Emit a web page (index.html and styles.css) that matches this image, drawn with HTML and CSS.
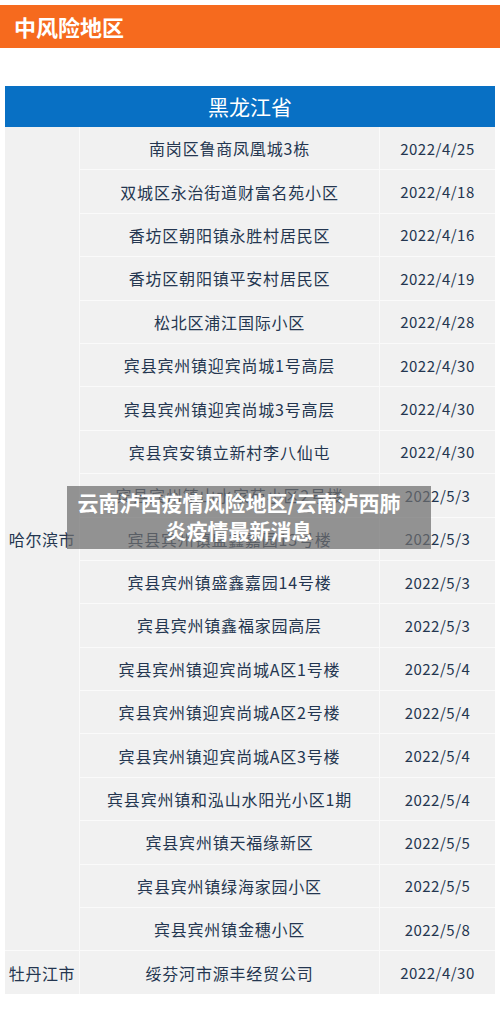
FILE: index.html
```html
<!DOCTYPE html>
<html lang="zh-CN">
<head>
  <meta charset="utf-8">
  <meta name="viewport" content="width=device-width, initial-scale=1">
  <link rel="stylesheet" href="styles.css">
  <title>中风险地区</title>
</head>
<body>
  <!-- Title bar -->
  <div class="title_bar">中风险地区</div>

  <div class="table_wrap">
    <div class="province">黑龙江省</div>
    <table class="risk_table">
      <tr>
        <td class="city" rowspan="19">哈尔滨市</td>
        <td class="place">南岗区鲁商凤凰城3栋</td>
        <td class="date">2022/4/25</td>
      </tr>
      <tr><td class="place">双城区永治街道财富名苑小区</td><td class="date">2022/4/18</td></tr>
      <tr><td class="place">香坊区朝阳镇永胜村居民区</td><td class="date">2022/4/16</td></tr>
      <tr><td class="place">香坊区朝阳镇平安村居民区</td><td class="date">2022/4/19</td></tr>
      <tr><td class="place">松北区浦江国际小区</td><td class="date">2022/4/28</td></tr>
      <tr><td class="place">宾县宾州镇迎宾尚城1号高层</td><td class="date">2022/4/30</td></tr>
      <tr><td class="place">宾县宾州镇迎宾尚城3号高层</td><td class="date">2022/4/30</td></tr>
      <tr><td class="place">宾县宾安镇立新村李八仙屯</td><td class="date">2022/4/30</td></tr>
      <tr><td class="place">宾县宾州镇山水家苑小区2号楼</td><td class="date">2022/5/3</td></tr>
      <tr><td class="place">宾县宾州镇盛鑫嘉园13号楼</td><td class="date">2022/5/3</td></tr>
      <tr><td class="place">宾县宾州镇盛鑫嘉园14号楼</td><td class="date">2022/5/3</td></tr>
      <tr><td class="place">宾县宾州镇鑫福家园高层</td><td class="date">2022/5/3</td></tr>
      <tr><td class="place">宾县宾州镇迎宾尚城A区1号楼</td><td class="date">2022/5/4</td></tr>
      <tr><td class="place">宾县宾州镇迎宾尚城A区2号楼</td><td class="date">2022/5/4</td></tr>
      <tr><td class="place">宾县宾州镇迎宾尚城A区3号楼</td><td class="date">2022/5/4</td></tr>
      <tr><td class="place">宾县宾州镇和泓山水阳光小区1期</td><td class="date">2022/5/4</td></tr>
      <tr><td class="place">宾县宾州镇天福缘新区</td><td class="date">2022/5/5</td></tr>
      <tr><td class="place">宾县宾州镇绿海家园小区</td><td class="date">2022/5/5</td></tr>
      <tr><td class="place">宾县宾州镇金穗小区</td><td class="date">2022/5/8</td></tr>
      <tr>
        <td class="city">牡丹江市</td>
        <td class="place">绥芬河市源丰经贸公司</td>
        <td class="date">2022/4/30</td>
      </tr>
    </table>

    <!-- Caption over the image -->
    <div class="caption">云南泸西疫情风险地区/云南泸西肺<br>炎疫情最新消息</div>
  </div>
</body>
</html>
```

FILE: styles.css
```css
body {
  margin: 0px;
  background-color: white;
  font-family: "Noto Sans CJK SC", "Noto Sans", sans-serif;
  color: rgb(36, 54, 80);
}

.title_bar {
  margin-top: 5px;
  height: 43px;
  line-height: 43px;
  background-color: rgb(246, 106, 30);
  color: white;
  font-size: 22px;
  font-weight: bold;
  padding-left: 14px;
}

.table_wrap {
  position: relative;
  margin: 38px 5px 0px 5px;
}

.province {
  height: 41px;
  line-height: 41px;
  background-color: rgb(8, 112, 196);
  color: white;
  font-size: 21px;
  text-align: center;
}

.risk_table {
  width: 100%;
  border-collapse: collapse;
  background-color: rgb(241, 241, 241);
  font-size: 16px;
}

.risk_table td {
  height: 42.4px;
  padding: 0px;
  text-align: center;
  border: 1px solid rgb(250, 250, 250);
  border-top-color: rgb(252, 252, 252);
}

.risk_table tr:first-child td {
  border-top: none;
}

.risk_table td:first-child {
  border-left: none;
}

.risk_table td:last-child {
  border-right: none;
}

.risk_table tr:last-child td {
  border-bottom: none;
}

.place {
  letter-spacing: 0.8px;
}

.city {
  width: 74px;
  text-align: left;
  padding-left: 6px;
  letter-spacing: 0.6px;
}

.date {
  width: 115px;
  font-size: 15px;
  letter-spacing: 0.5px;
}

.caption {
  position: absolute;
  left: 62px;
  top: 400px;
  width: 364px;
  height: 63px;
  padding: 2px 29px 0px 9px;
  box-sizing: border-box;
  background-color: rgba(110, 110, 110, 0.72);
  color: white;
  font-size: 21px;
  font-weight: bold;
  line-height: 28px;
  text-align: center;
  white-space: nowrap;
}
```
